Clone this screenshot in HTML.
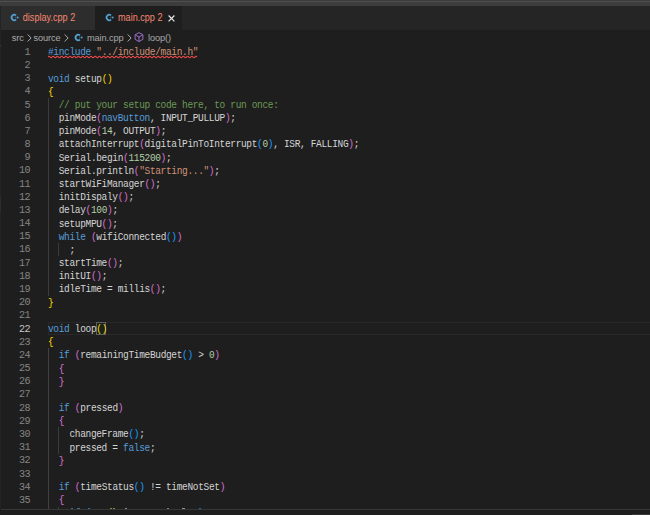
<!DOCTYPE html>
<html><head><meta charset="utf-8"><style>
*{margin:0;padding:0;box-sizing:border-box}
html,body{width:650px;height:515px;overflow:hidden;background:#1e1e1e}
body{position:relative;font-family:"Liberation Sans",sans-serif}
#title{position:absolute;left:0;top:0;width:650px;height:6px;background:#3c3c3c}
#tline{position:absolute;left:0;top:1px;width:650px;height:1px;background:#4e4e4e}
#tabs{position:absolute;left:0;top:6px;width:650px;height:24px;background:#252526}
.tab{position:absolute;top:0;height:24px;font-size:9.1px;color:#f48771;white-space:nowrap}
.tab .lbl{position:absolute;top:6.3px;transform:scaleY(1.12);transform-origin:0 0}
#t1{left:0;width:95px;background:#2d2d2d}
#t2{left:95px;width:87px;background:#1e1e1e}
.cpp{position:absolute;width:9px;height:9px;overflow:visible}

#bc{position:absolute;left:0;top:29px;width:650px;height:16px;font-size:9.2px;letter-spacing:-0.1px;color:#a9a9a9;white-space:nowrap}
#bc span{position:absolute;top:4px}
#bc svg{position:absolute;overflow:visible}
.ln{position:absolute;left:0;width:30px;text-align:right;font-family:"Liberation Mono",monospace;font-size:10.1px;letter-spacing:-0.6px;line-height:13.18px;height:13.18px;padding-top:0.6px;color:#858585}
.ln.act{color:#c6c6c6}
.cl{position:absolute;left:48px;font-family:"Liberation Mono",monospace;font-size:9.5px;letter-spacing:-0.34px;line-height:13.18px;height:13.18px;padding-top:0.9px;color:#d4d4d4;white-space:pre;transform:scaleY(1.1);transform-origin:0 10px}
.k{color:#569cd6}.c{color:#6a9955}.n{color:#b5cea8}.s{color:#ce9178}
.b1{color:#ffd700}.b2{color:#da70d6}.b3{color:#179fff}
.ig{position:absolute;width:1px;background:#3c3c3c}
.ig.ia{background:#414141}
#cur{position:absolute;left:48px;top:321.98px;width:602px;height:13.18px;border:1px solid #282828;border-right:none}
.bm{position:absolute;top:321.98px;height:13.18px;border:1px solid #5e5e5e;background:rgba(0,100,0,0.1)}
#sq{position:absolute;left:48px;top:55px;overflow:hidden}
#bot{position:absolute;left:1px;top:509px;width:649px;height:1px;background:#363636}
#bot2{position:absolute;left:0;top:510px;width:650px;height:5px;background:#1e1e1e}
.dot{position:absolute;top:507.5px;height:1.5px;width:2px}
</style></head><body>
<div id="title"></div>
<div id="tline"></div>
<div id="tabs">
 <div class="tab" id="t1">
  <svg class="cpp" style="left:11px;top:6.9px" viewBox="0 0 9 9"><path d="M5.03 2.43A2.7 2.7 0 1 0 5.03 6.57" stroke="#53a2d2" stroke-width="1.7" fill="none"/><circle cx="6.6" cy="4.5" r="1.05" fill="#53a2d2"/><rect x="4.0" y="3.7" width="0.6" height="1.6" fill="#3f7ea0"/></svg>
  <span class="lbl" style="left:22.8px">display.cpp 2</span>
 </div>
 <div class="tab" id="t2">
  <svg class="cpp" style="left:11.3px;top:6.8px" viewBox="0 0 9 9"><path d="M5.03 2.43A2.7 2.7 0 1 0 5.03 6.57" stroke="#53a2d2" stroke-width="1.7" fill="none"/><circle cx="6.6" cy="4.5" r="1.05" fill="#53a2d2"/><rect x="4.0" y="3.7" width="0.6" height="1.6" fill="#3f7ea0"/></svg>
  <span class="lbl" style="left:23px">main.cpp 2</span>
  <svg style="position:absolute;left:73.3px;top:9.1px" width="7" height="7" viewBox="0 0 7 7"><path d="M0.6 0.5L6.4 6.3M6.4 0.5L0.6 6.3" stroke="#ececec" stroke-width="1.15"/></svg>
 </div>
</div>
<div id="bc">
 <span style="left:11.8px">src</span>
 <svg style="left:26.5px;top:4.6px" width="5" height="8" viewBox="0 0 5 8"><path d="M0.7 0.5L4.1 4L0.7 7.5" stroke="#ababab" stroke-width="1" fill="none"/></svg>
 <span style="left:33.6px">source</span>
 <svg style="left:64px;top:4.6px" width="5" height="8" viewBox="0 0 5 8"><path d="M0.7 0.5L4.1 4L0.7 7.5" stroke="#ababab" stroke-width="1" fill="none"/></svg>
 <svg class="cpp" style="left:75.4px;top:3.9px" viewBox="0 0 9 9"><path d="M5.03 2.43A2.7 2.7 0 1 0 5.03 6.57" stroke="#53a2d2" stroke-width="1.7" fill="none"/><circle cx="6.6" cy="4.5" r="1.05" fill="#53a2d2"/><rect x="4.0" y="3.7" width="0.6" height="1.6" fill="#3f7ea0"/></svg>
 <span style="left:87px">main.cpp</span>
 <svg style="left:127px;top:4.6px" width="5" height="8" viewBox="0 0 5 8"><path d="M0.7 0.5L4.1 4L0.7 7.5" stroke="#ababab" stroke-width="1" fill="none"/></svg>
 <svg style="left:134.4px;top:3px" width="10" height="10" viewBox="0 0 10 10"><path d="M5 0.6L8.9 2.8V7.3L5 9.6L1.1 7.3V2.8Z M1.4 3L5 5L8.6 3 M5 5V9.4" stroke="#ab7be0" stroke-width="0.85" fill="none" stroke-linejoin="round"/></svg>
 <span style="left:148px">loop()</span>
</div>
<div id="cur"></div>
<div class="bm" style="left:96px;width:9.8px"></div>
<div class="ig" style="left:48.00px;top:97.92px;height:197.70px"></div>
<div class="ig" style="left:57.82px;top:242.90px;height:13.18px"></div>
<div class="ig ia" style="left:48.00px;top:348.34px;height:171.34px"></div>
<div class="ig" style="left:57.82px;top:427.42px;height:26.36px"></div>
<div class="ig" style="left:57.82px;top:506.50px;height:13.18px"></div>
<div class="ln" style="top:45.20px">1</div>
<div class="cl" style="top:45.20px"><span class="k">#include</span> <span class="s">&quot;../include/main.h&quot;</span></div>
<div class="ln" style="top:58.38px">2</div>
<div class="ln" style="top:71.56px">3</div>
<div class="cl" style="top:71.56px"><span class="k">void</span> setup<span class="b1">()</span></div>
<div class="ln" style="top:84.74px">4</div>
<div class="cl" style="top:84.74px"><span class="b1">{</span></div>
<div class="ln" style="top:97.92px">5</div>
<div class="cl" style="top:97.92px">  <span class="c">// put your setup code here, to run once:</span></div>
<div class="ln" style="top:111.10px">6</div>
<div class="cl" style="top:111.10px">  pinMode<span class="b2">(</span><span class="k">navButton</span>, INPUT_PULLUP<span class="b2">)</span>;</div>
<div class="ln" style="top:124.28px">7</div>
<div class="cl" style="top:124.28px">  pinMode<span class="b2">(</span><span class="n">14</span>, OUTPUT<span class="b2">)</span>;</div>
<div class="ln" style="top:137.46px">8</div>
<div class="cl" style="top:137.46px">  attachInterrupt<span class="b2">(</span>digitalPinToInterrupt<span class="b3">(</span><span class="n">0</span><span class="b3">)</span>, ISR, FALLING<span class="b2">)</span>;</div>
<div class="ln" style="top:150.64px">9</div>
<div class="cl" style="top:150.64px">  Serial.begin<span class="b2">(</span><span class="n">115200</span><span class="b2">)</span>;</div>
<div class="ln" style="top:163.82px">10</div>
<div class="cl" style="top:163.82px">  Serial.println<span class="b2">(</span><span class="s">&quot;Starting...&quot;</span><span class="b2">)</span>;</div>
<div class="ln" style="top:177.00px">11</div>
<div class="cl" style="top:177.00px">  startWiFiManager<span class="b2">()</span>;</div>
<div class="ln" style="top:190.18px">12</div>
<div class="cl" style="top:190.18px">  initDispaly<span class="b2">()</span>;</div>
<div class="ln" style="top:203.36px">13</div>
<div class="cl" style="top:203.36px">  delay<span class="b2">(</span><span class="n">100</span><span class="b2">)</span>;</div>
<div class="ln" style="top:216.54px">14</div>
<div class="cl" style="top:216.54px">  setupMPU<span class="b2">()</span>;</div>
<div class="ln" style="top:229.72px">15</div>
<div class="cl" style="top:229.72px">  <span class="k">while</span> <span class="b2">(</span>wifiConnected<span class="b3">()</span><span class="b2">)</span></div>
<div class="ln" style="top:242.90px">16</div>
<div class="cl" style="top:242.90px">    ;</div>
<div class="ln" style="top:256.08px">17</div>
<div class="cl" style="top:256.08px">  startTime<span class="b2">()</span>;</div>
<div class="ln" style="top:269.26px">18</div>
<div class="cl" style="top:269.26px">  initUI<span class="b2">()</span>;</div>
<div class="ln" style="top:282.44px">19</div>
<div class="cl" style="top:282.44px">  idleTime = millis<span class="b2">()</span>;</div>
<div class="ln" style="top:295.62px">20</div>
<div class="cl" style="top:295.62px"><span class="b1">}</span></div>
<div class="ln" style="top:308.80px">21</div>
<div class="ln act" style="top:321.98px">22</div>
<div class="cl" style="top:321.98px"><span class="k">void</span> loop<span class="b1">()</span></div>
<div class="ln" style="top:335.16px">23</div>
<div class="cl" style="top:335.16px"><span class="b1">{</span></div>
<div class="ln" style="top:348.34px">24</div>
<div class="cl" style="top:348.34px">  <span class="k">if</span> <span class="b2">(</span>remainingTimeBudget<span class="b3">()</span> &gt; <span class="n">0</span><span class="b2">)</span></div>
<div class="ln" style="top:361.52px">25</div>
<div class="cl" style="top:361.52px">  <span class="b2">{</span></div>
<div class="ln" style="top:374.70px">26</div>
<div class="cl" style="top:374.70px">  <span class="b2">}</span></div>
<div class="ln" style="top:387.88px">27</div>
<div class="ln" style="top:401.06px">28</div>
<div class="cl" style="top:401.06px">  <span class="k">if</span> <span class="b2">(</span>pressed<span class="b2">)</span></div>
<div class="ln" style="top:414.24px">29</div>
<div class="cl" style="top:414.24px">  <span class="b2">{</span></div>
<div class="ln" style="top:427.42px">30</div>
<div class="cl" style="top:427.42px">    changeFrame<span class="b3">()</span>;</div>
<div class="ln" style="top:440.60px">31</div>
<div class="cl" style="top:440.60px">    pressed = <span class="k">false</span>;</div>
<div class="ln" style="top:453.78px">32</div>
<div class="cl" style="top:453.78px">  <span class="b2">}</span></div>
<div class="ln" style="top:466.96px">33</div>
<div class="ln" style="top:480.14px">34</div>
<div class="cl" style="top:480.14px">  <span class="k">if</span> <span class="b2">(</span>timeStatus<span class="b3">()</span> != timeNotSet<span class="b2">)</span></div>
<div class="ln" style="top:493.32px">35</div>
<div class="cl" style="top:493.32px">  <span class="b2">{</span></div>
<svg id="sq" width="149" height="4" viewBox="0 0 149 4"><path d="M0 2 Q1.05 0.6 2.10 2 T4.20 2 Q5.25 0.6 6.30 2 T8.40 2 Q9.45 0.6 10.50 2 T12.60 2 Q13.65 0.6 14.70 2 T16.80 2 Q17.85 0.6 18.90 2 T21.00 2 Q22.05 0.6 23.10 2 T25.20 2 Q26.25 0.6 27.30 2 T29.40 2 Q30.45 0.6 31.50 2 T33.60 2 Q34.65 0.6 35.70 2 T37.80 2 Q38.85 0.6 39.90 2 T42.00 2 Q43.05 0.6 44.10 2 T46.20 2 Q47.25 0.6 48.30 2 T50.40 2 Q51.45 0.6 52.50 2 T54.60 2 Q55.65 0.6 56.70 2 T58.80 2 Q59.85 0.6 60.90 2 T63.00 2 Q64.05 0.6 65.10 2 T67.20 2 Q68.25 0.6 69.30 2 T71.40 2 Q72.45 0.6 73.50 2 T75.60 2 Q76.65 0.6 77.70 2 T79.80 2 Q80.85 0.6 81.90 2 T84.00 2 Q85.05 0.6 86.10 2 T88.20 2 Q89.25 0.6 90.30 2 T92.40 2 Q93.45 0.6 94.50 2 T96.60 2 Q97.65 0.6 98.70 2 T100.80 2 Q101.85 0.6 102.90 2 T105.00 2 Q106.05 0.6 107.10 2 T109.20 2 Q110.25 0.6 111.30 2 T113.40 2 Q114.45 0.6 115.50 2 T117.60 2 Q118.65 0.6 119.70 2 T121.80 2 Q122.85 0.6 123.90 2 T126.00 2 Q127.05 0.6 128.10 2 T130.20 2 Q131.25 0.6 132.30 2 T134.40 2 Q135.45 0.6 136.50 2 T138.60 2 Q139.65 0.6 140.70 2 T142.80 2 Q143.85 0.6 144.90 2 T147.00 2 Q148.05 0.6 149.10 2 T151.20 2" stroke="#f14c4c" stroke-width="1.1" fill="none"/></svg>
<div id="lcol" style="position:absolute;left:0;top:6px;width:1px;height:503px;background:#232323"></div>
<div style="position:absolute;left:0;top:45px;width:1px;height:1px;background:#3a3a3a"></div>
<div style="position:absolute;left:0;top:197px;width:1px;height:16px;background:#2c2c30"></div>
<div id="bot"></div>
<div id="bot2"></div>
<div style="position:absolute;left:632px;top:514px;width:18px;height:1px;background:#383838"></div>
<div class="dot" style="left:71px;background:#3f6f95"></div>
<div class="dot" style="left:77px;width:3px;background:#3f6f95"></div>
<div class="dot" style="left:88px;background:#2a6fa0"></div>
<div class="dot" style="left:110px;background:#8a8040"></div>
<div class="dot" style="left:113px;background:#8a8040"></div>
<div class="dot" style="left:125px;background:#8a8a8a"></div>
<div class="dot" style="left:167px;background:#8a8060"></div>
<div class="dot" style="left:182px;width:3px;background:#909090"></div>
<div class="dot" style="left:199px;background:#2a6fa0"></div>
</body></html>
